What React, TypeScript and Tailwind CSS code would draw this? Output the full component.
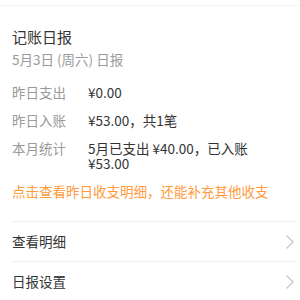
import React from "react";

interface StatRow {
  label: string;
  lines: string[];
}

const rows: StatRow[] = [
  { label: "昨日支出", lines: ["¥0.00"] },
  { label: "昨日入账", lines: ["¥53.00，共1笔"] },
  { label: "本月统计", lines: ["5月已支出 ¥40.00，已入账", "¥53.00"] },
];

const Chevron = () => (
  <svg width="8" height="14" viewBox="0 0 8 14" fill="none">
    <polyline points="1,1 7,7 1,13" stroke="#c4c4c4" strokeWidth="1.2" strokeLinejoin="round" strokeLinecap="round" />
  </svg>
);

const App: React.FC = () => {
  return (
    <div
      className="w-[300px] h-[300px] bg-white overflow-hidden pt-[5px]"
      style={{ fontFamily: '"Noto Sans CJK SC", "Noto Sans", sans-serif' }}
    >
      <div className="border-t border-[#f4f4f4]" />

      <div className="px-3 pt-5">
        <div className="text-[15px] leading-[22px] text-[#333]">记账日报</div>
        <div className="mt-px text-[13.5px] leading-[20px] text-[#9a9a9a]">5月3日 (周六) 日报</div>

        <div className="mt-4 flex flex-col gap-[13px]">
          {rows.map((row) => (
            <div key={row.label} className="flex items-start text-[13.5px] leading-[15px]">
              <div className="w-[76px] shrink-0 text-[#9a9a9a]">{row.label}</div>
              <div className="text-[#333]">
                {row.lines.map((line) => (
                  <div key={line}>{line}</div>
                ))}
              </div>
            </div>
          ))}
          <div className="text-[13.5px] leading-[15px] text-[#ff9a3d]">
            点击查看昨日收支明细，还能补充其他收支
          </div>
        </div>
      </div>

      <div className="mt-[22px] pl-3 pr-1">
        {["查看明细", "日报设置"].map((item) => (
          <div
            key={item}
            className="flex items-center justify-between h-10 border-t border-[#f0f0f0] pr-[2px]"
          >
            <span className="text-[13.5px] text-[#333]">{item}</span>
            <Chevron />
          </div>
        ))}
      </div>
    </div>
  );
};

export default App;
